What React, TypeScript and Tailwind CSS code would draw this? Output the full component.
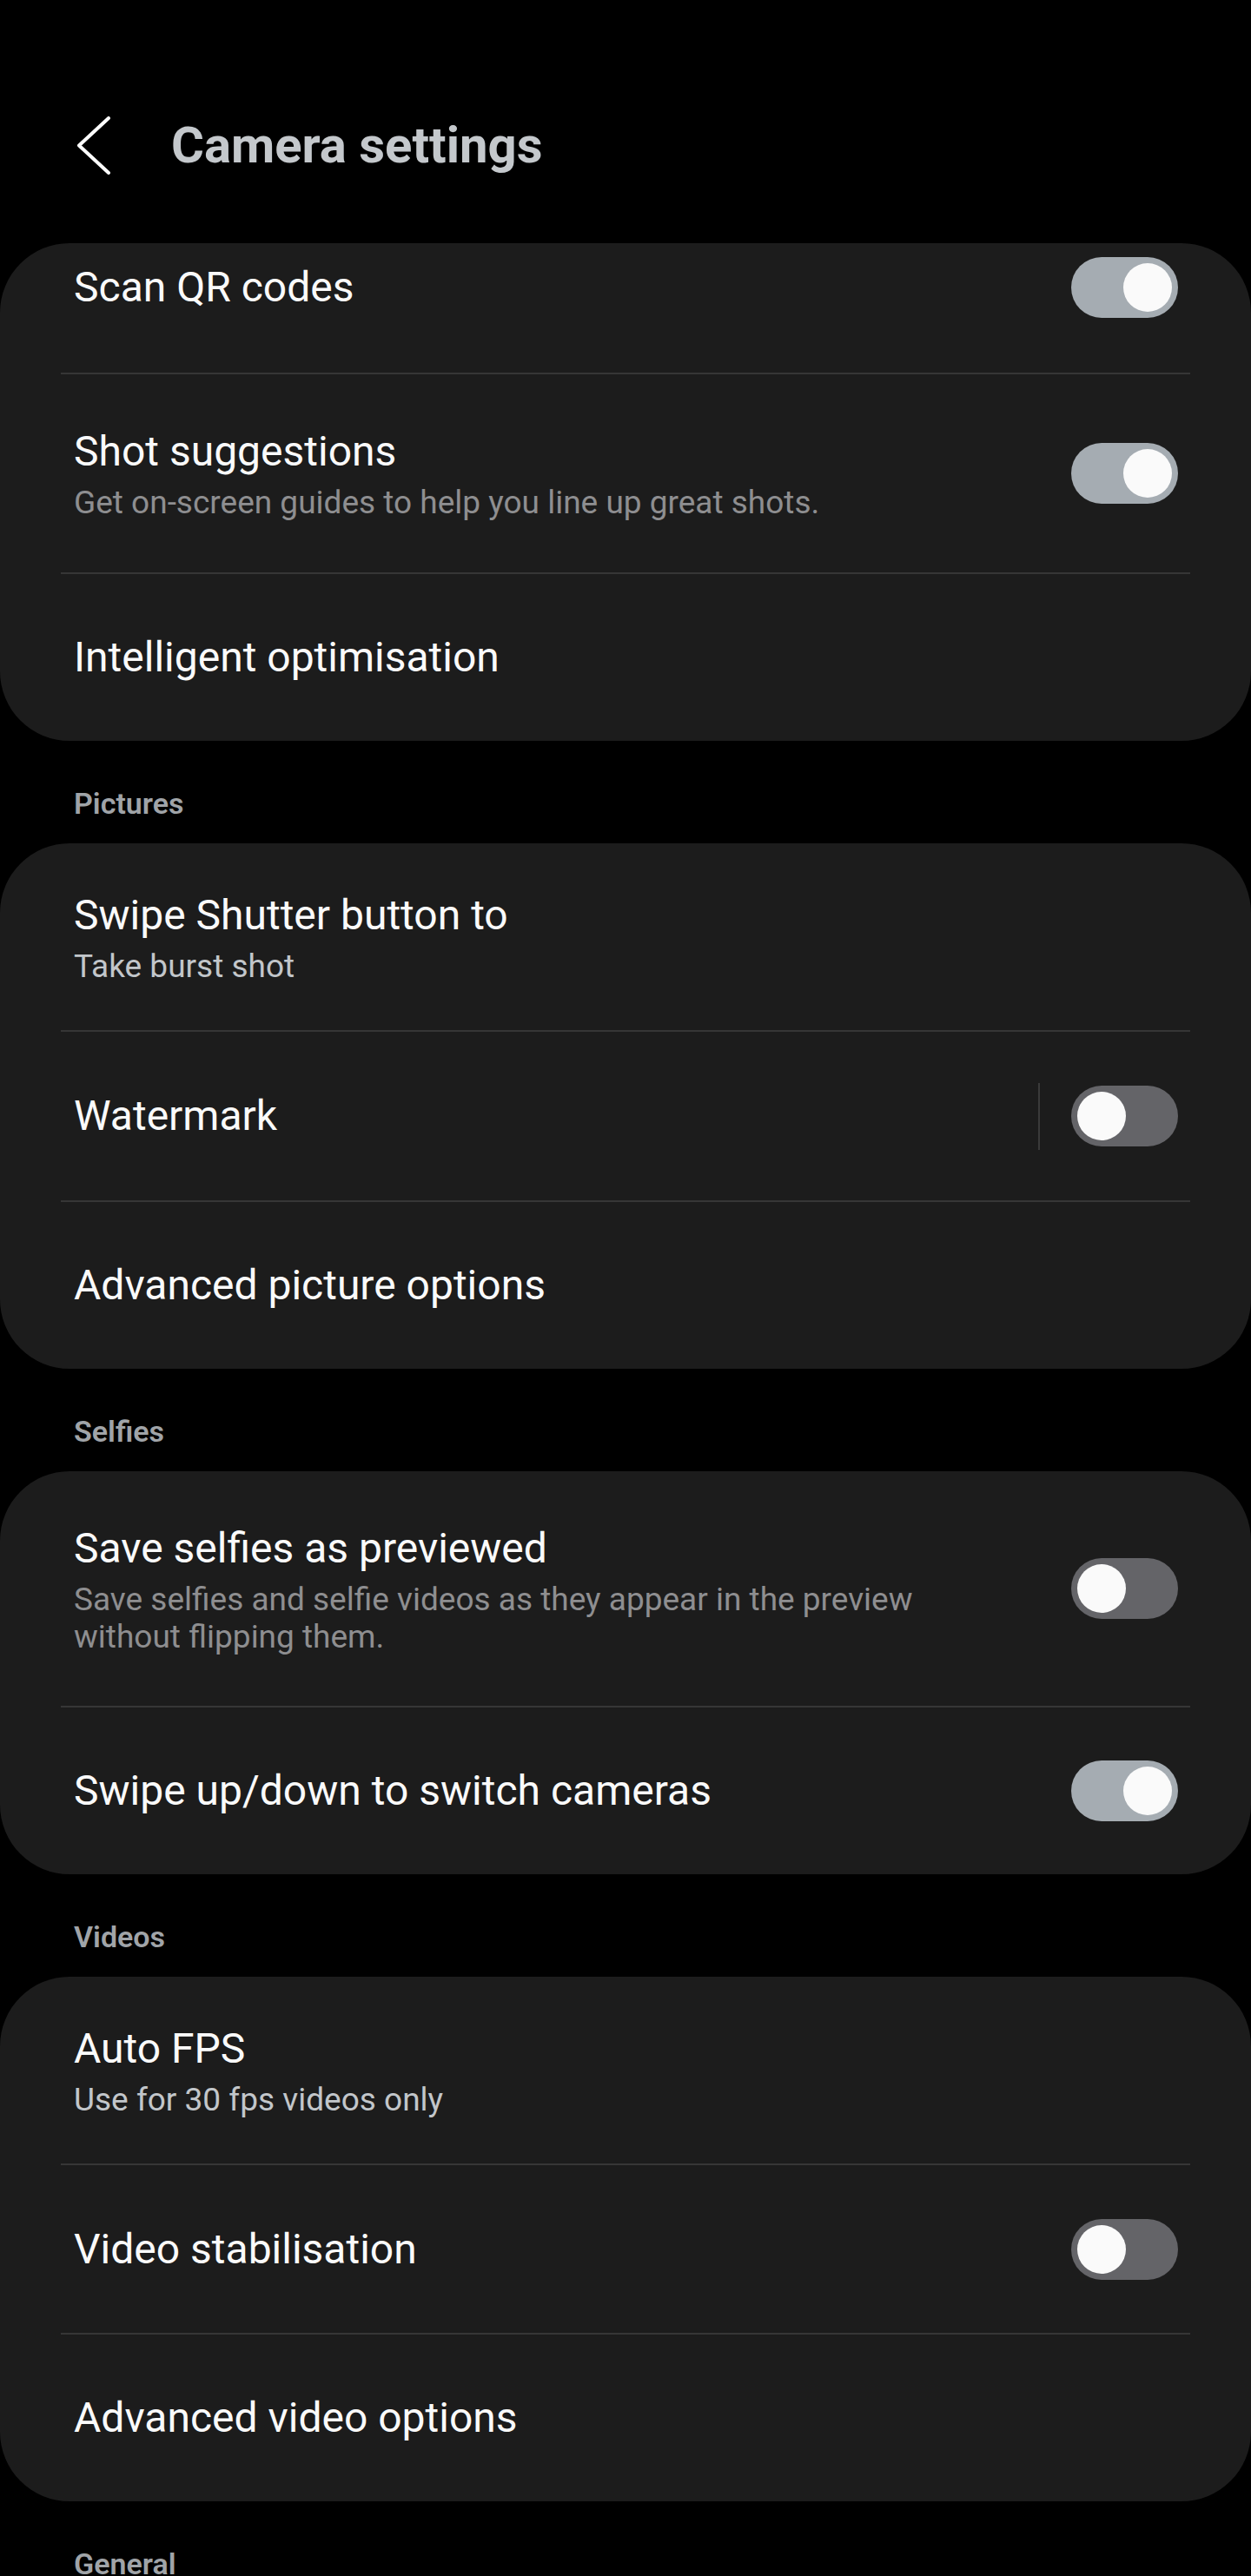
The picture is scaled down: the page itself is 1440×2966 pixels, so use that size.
interface Row {
  title: string;
  sub?: React.ReactNode;
  subTone?: 'muted' | 'value';
  toggle?: boolean;
  divider?: boolean;
  h: number;
}

const Toggle = ({ on }: { on: boolean }) => (
  <div
    className={`flex h-[70px] w-[123px] shrink-0 items-center rounded-full px-[7px] ${
      on ? 'justify-end bg-[#a5acb2]' : 'justify-start bg-[#646468]'
    }`}
  >
    <div className="h-[56px] w-[56px] rounded-full bg-[#fafafa]" />
  </div>
);

const heights: Record<number, string> = {
  149: 'h-[149px]',
  192: 'h-[192px]',
  193: 'h-[193px]',
  194: 'h-[194px]',
  215: 'h-[215px]',
  228: 'h-[228px]',
  270: 'h-[270px]',
};

const SettingRow = ({ row }: { row: Row }) => (
  <div className={`flex items-center justify-between pl-[85px] pr-[84px] ${heights[row.h]}`}>
    <div className="flex flex-col gap-[7px]">
      <div className="text-[48px] leading-[60px] text-[#fafafa]">{row.title}</div>
      {row.sub && (
        <div
          className={`text-[37px] leading-[43px] ${
            row.subTone === 'value' ? 'text-[#c2c6ca]' : 'text-[#8e8e90]'
          }`}
        >
          {row.sub}
        </div>
      )}
    </div>
    {row.toggle !== undefined && (
      <div className="flex items-center">
        {row.divider && <div className="mr-[36px] h-[77px] w-[2px] bg-[#3a3a3a]" />}
        <Toggle on={row.toggle} />
      </div>
    )}
  </div>
);

const Card = ({ rows, first }: { rows: Row[]; first?: boolean }) => (
  <div className="rounded-[80px] bg-[#1c1c1c]">
    {rows.map((row, i) => (
      <div key={row.title}>
        {i > 0 && <div className="mx-[70px] h-[2px] bg-[#363636]" />}
        {first && i === 0 ? (
          // partly scrolled under the app bar
          <div className="flex h-[149px] items-start justify-between pl-[85px] pr-[84px] pt-[16px]">
            <div className="text-[48px] leading-[70px] text-[#fafafa]">{row.title}</div>
            <Toggle on={!!row.toggle} />
          </div>
        ) : (
          <SettingRow row={row} />
        )}
      </div>
    ))}
  </div>
);

const SectionHeader = ({ label }: { label: string }) => (
  <div className="pl-[85px] pt-[52px] pb-[26px] text-[34px] font-semibold leading-[40px] text-[#a0a4a8]">
    {label}
  </div>
);

export default function App() {
  return (
    <div
      className="min-h-screen bg-black"
      style={{ fontFamily: 'Roboto, "Noto Sans", sans-serif' }}
    >
      {/* Top bar */}
      <div className="flex h-[280px] items-center pt-[54px]">
        <svg className="ml-[88px] h-[67px] w-[40px]" viewBox="0 0 40 67" fill="none">
          <polyline
            points="37,2 3,33.5 37,65"
            stroke="#ffffff"
            strokeWidth="4"
            strokeLinecap="round"
            strokeLinejoin="round"
          />
        </svg>
        <h1 className="ml-[69px] text-[58px] font-bold leading-[70px] text-[#c4c8cc]">Camera settings</h1>
      </div>

      <Card
        first
        rows={[
          { title: 'Scan QR codes', toggle: true, h: 149 },
          {
            title: 'Shot suggestions',
            sub: 'Get on-screen guides to help you line up great shots.',
            toggle: true,
            h: 228,
          },
          { title: 'Intelligent optimisation', h: 192 },
        ]}
      />

      <SectionHeader label="Pictures" />
      <Card
        rows={[
          { title: 'Swipe Shutter button to', sub: 'Take burst shot', subTone: 'value', h: 215 },
          { title: 'Watermark', toggle: false, divider: true, h: 194 },
          { title: 'Advanced picture options', h: 192 },
        ]}
      />

      <SectionHeader label="Selfies" />
      <Card
        rows={[
          {
            title: 'Save selfies as previewed',
            sub: (
              <>
                Save selfies and selfie videos as they appear in the preview
                <br />
                without flipping them.
              </>
            ),
            toggle: false,
            h: 270,
          },
          { title: 'Swipe up/down to switch cameras', toggle: true, h: 192 },
        ]}
      />

      <SectionHeader label="Videos" />
      <Card
        rows={[
          { title: 'Auto FPS', sub: 'Use for 30 fps videos only', subTone: 'value', h: 215 },
          { title: 'Video stabilisation', toggle: false, h: 193 },
          { title: 'Advanced video options', h: 192 },
        ]}
      />

      <SectionHeader label="General" />
    </div>
  );
}
